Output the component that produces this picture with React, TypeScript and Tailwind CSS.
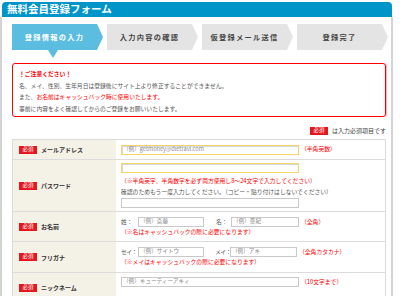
import React from "react";

const F = "font-['Noto_Sans_CJK_JP',sans-serif]";

function Step({ label, active }: { label: string; active?: boolean }) {
  return (
    <div className="relative w-[91px] h-[26px] shrink-0">
      <div
        className={
          "h-full flex items-center justify-center pr-[6px] text-[7.2px] font-bold tracking-[1.3px] [clip-path:polygon(0_0,85px_0,91px_50%,85px_100%,0_100%)] " +
          (active ? "bg-[#5bbde0] text-white" : "bg-[#e4e4e4] text-[#444]")
        }
      >
        {label}
      </div>
      {active && (
        <div className="absolute left-[36px] top-[26px] w-0 h-0 border-l-[5px] border-r-[5px] border-t-[8px] border-l-transparent border-r-transparent border-t-[#5bbde0]" />
      )}
    </div>
  );
}

function Badge() {
  return (
    <span className="inline-flex items-center justify-center w-[18px] h-[8px] bg-[#e5161e] text-white text-[5.5px] leading-none shrink-0">
      必須
    </span>
  );
}

function Field({ w, text, yellow }: { w: number; text?: string; yellow?: boolean }) {
  return (
    <div
      style={{ width: w }}
      className={
        "h-[10px] shrink-0 flex items-center pl-[1px] text-[5.6px] text-[#8a8a8a] leading-none bg-white border whitespace-nowrap overflow-hidden " +
        (yellow ? "border-[#f3d56c] shadow-[inset_1px_1px_0_#d8d8d8]" : "border-[#c9c9c9]")
      }
    >
      {text}
    </div>
  );
}

function Row({ label, h, children }: { label: string; h: number; children: React.ReactNode }) {
  return (
    <div style={{ height: h }} className="flex border-t border-[#dcdcdc]">
      <div className="w-[103px] shrink-0 bg-[#f4f1e7] flex items-center pl-[6px] gap-[4px]">
        <Badge />
        <span className="text-[6px] font-bold text-[#333]">{label}</span>
      </div>
      <div className="flex-1 pl-[5px]">{children}</div>
    </div>
  );
}

export default function App() {
  return (
    <div className={"w-[400px] h-[296px] overflow-hidden bg-white pt-[2px] " + F}>
      <div className="w-[393px]">
        <div className="ml-[2px] w-[390px] h-[15px] rounded-t-[4px] bg-[#0095c9] flex items-center pl-[5px] text-white text-[10.5px] font-bold leading-none">
          無料会員登録フォーム
        </div>
        <div className="border-l-2 border-r-2 border-[#d4d4d4] pl-[10px] pr-[5px] pt-[7px] h-[300px]">
          <div className="flex gap-[4px]">
            <Step label="登録情報の入力" active />
            <Step label="入力内容の確認" />
            <Step label="仮登録メール送信" />
            <Step label="登録完了" />
          </div>

          <div className="mt-[13px] h-[54px] border border-[#f00] rounded-[3px] pl-[6px] pt-[4px] text-[5.8px] leading-[11.5px] text-[#555] shadow-[1px_0_0_#ffb0b0]">
            <p className="text-[#f00] font-bold">！ご注意ください！</p>
            <p>名、メイ、性別、生年月日は登録後にサイト上より修正することができません。</p>
            <p>
              また、<span className="text-[#f00]">お名前はキャッシュバック時に使用いたします。</span>
            </p>
            <p>事前に内容をよく確認してからのご登録をお願いいたします。</p>
          </div>

          <div className="mt-[9px] h-[9px] flex items-center justify-end gap-[4px] text-[6px] text-[#444]">
            <Badge />
            <span>は入力必須項目です</span>
          </div>

          <div className="mt-[4px] border-l border-r border-[#dcdcdc] text-[5.8px] whitespace-nowrap">
            <Row label="メールアドレス" h={20}>
              <div className="h-full flex items-center gap-[2px]">
                <Field w={178} yellow text="（例）getmoney@dietravl.com" />
                <span className="text-[#f00]">（半角英数）</span>
              </div>
            </Row>
            <Row label="パスワード" h={52}>
              <div className="pt-[3px]">
                <Field w={178} yellow />
                <p className="mt-[2px] leading-[11px] text-[#f00]">
                  （※半角英字、半角数字を必ず両方使用し8〜24文字で入力してください）
                </p>
                <p className="leading-[11px] text-[#555]">
                  確認のためもう一度入力してください。（コピー・貼り付けはしないでください）
                </p>
                <div className="mt-[1px]">
                  <Field w={178} />
                </div>
              </div>
            </Row>
            <Row label="お名前" h={30}>
              <div className="pt-[5px]">
                <div className="flex items-center">
                  <span className="w-[17px] text-[#555]">姓：</span>
                  <Field w={66} text="（例）斎藤" />
                  <span className="ml-[12px] w-[15px] text-[#555]">名：</span>
                  <Field w={68} text="（例）亜紀" />
                  <span className="ml-[2px] text-[#f00]">（全角）</span>
                </div>
                <p className="leading-[9px] text-[#f00]">（※名はキャッシュバックの際に必要になります）</p>
              </div>
            </Row>
            <Row label="フリガナ" h={31}>
              <div className="pt-[5px]">
                <div className="flex items-center">
                  <span className="w-[17px] text-[#555] tracking-[-0.6px]">セイ：</span>
                  <Field w={66} text="（例）サイトウ" />
                  <span className="ml-[11px] w-[15px] text-[#555] tracking-[-0.6px]">メイ：</span>
                  <Field w={67} text="（例）アキ" />
                  <span className="ml-[2px] text-[#f00]">（全角カタカナ）</span>
                </div>
                <p className="leading-[10px] text-[#f00]">（※メイはキャッシュバックの際に必要になります）</p>
              </div>
            </Row>
            <Row label="ニックネーム" h={30}>
              <div className="pt-[4px] flex items-center gap-[2px]">
                <Field w={178} text="（例）キューティーアキィ" />
                <span className="text-[#f00]">（10文字まで）</span>
              </div>
            </Row>
          </div>
        </div>
      </div>
    </div>
  );
}
